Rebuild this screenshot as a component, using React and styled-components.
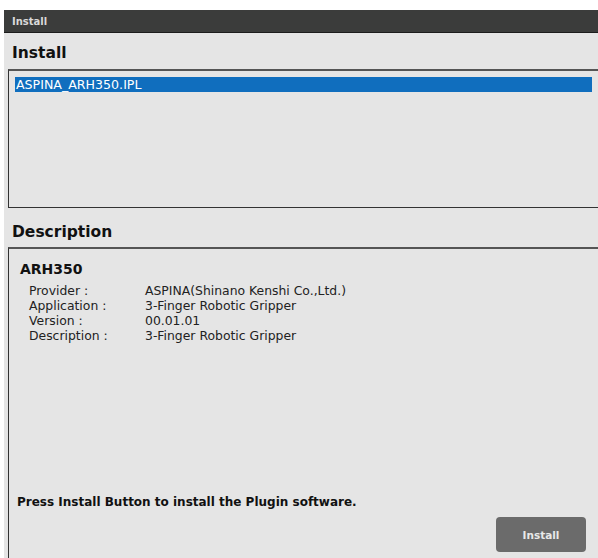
import React from 'react';
import styled, { createGlobalStyle } from 'styled-components';

const GlobalStyle = createGlobalStyle`
html, body {
  margin: 0;
  padding: 0;
  background: #ffffff;
  overflow: hidden;
}
body {
  font-family: "DejaVu Sans", Verdana, sans-serif;
}
`;

const Screen = styled.div`
padding: 10px 0 0 4px;
width: 596px;
height: 548px;
overflow: hidden;
`;

const Window = styled.div`
background: #e5e5e5;
height: 100%;
display: flex;
flex-direction: column;
`;

const TitleBar = styled.div`
height: 22px;
background: #3b3c3b;
border-bottom: 1px solid #1c1c1c;
color: #d9d9d9;
font-size: 10px;
font-weight: bold;
display: flex;
align-items: center;
padding-left: 8px;
`;

const Body = styled.div`
flex: 1;
display: flex;
flex-direction: column;
padding-left: 4px;
`;

const SectionTitle = styled.h2`
box-sizing: border-box;
margin: 0;
font-size: 15.5px;
font-weight: bold;
color: #111;
height: ${p => p.$height}px;
padding: ${p => p.$top}px 0 0 4px;
display: flex;
align-items: center;
`;

const Panel = styled.div`
box-sizing: border-box;
border: 1px solid #333;
border-top: 2px solid #555;
`;

const FileList = styled(Panel)`
height: 139px;
padding: 6px 7px 6px 6px;
`;

const FileItem = styled.div`
background: ${p => (p.$selected ? '#106ebe' : 'transparent')};
color: ${p => (p.$selected ? '#fff' : '#111')};
font-size: 12.6px;
height: 15px;
line-height: 15px;
padding-left: 1px;
`;

const DescPanel = styled(Panel)`
flex: 1;
display: flex;
flex-direction: column;
padding: 11px 13px 0 11px;
border-bottom: none;
`;

const PluginName = styled.div`
font-size: 14px;
font-weight: bold;
color: #111;
height: 18px;
line-height: 18px;
margin-bottom: 5px;
`;

const InfoGrid = styled.div`
display: grid;
grid-template-columns: 116px auto;
padding-left: 9px;
font-size: 12.4px;
line-height: 15px;
color: #222;
`;

const Spacer = styled.div`
flex: 1;
`;

const Notice = styled.div`
font-size: 12px;
font-weight: bold;
color: #111;
margin: 0 0 8px -3px;
`;

const Actions = styled.div`
display: flex;
justify-content: flex-end;
margin-bottom: 6px;
`;

const Button = styled.button`
width: 90px;
height: 35px;
border: none;
border-radius: 4px;
background: #6b6b6b;
color: #e8e8e8;
font-family: inherit;
font-size: 10.5px;
font-weight: bold;
`;

const info = [
  ['Provider :', 'ASPINA(Shinano Kenshi Co.,Ltd.)'],
  ['Application :', '3-Finger Robotic Gripper'],
  ['Version :', '00.01.01'],
  ['Description :', '3-Finger Robotic Gripper'],
];

export default function App() {
  return (
    <>
      <GlobalStyle />
      <Screen>
        <Window>
          <TitleBar>Install</TitleBar>
          <Body>
            <SectionTitle $height={36} $top={4}>Install</SectionTitle>
            <FileList>
              <FileItem $selected>ASPINA_ARH350.IPL</FileItem>
            </FileList>
            <SectionTitle $height={39} $top={9}>Description</SectionTitle>
            <DescPanel>
              <PluginName>ARH350</PluginName>
              <InfoGrid>
                {info.map(([k, v]) => (
                  <React.Fragment key={k}>
                    <span>{k}</span>
                    <span>{v}</span>
                  </React.Fragment>
                ))}
              </InfoGrid>
              <Spacer />
              <Notice>Press Install Button to install the Plugin software.</Notice>
              <Actions>
                <Button>Install</Button>
              </Actions>
            </DescPanel>
          </Body>
        </Window>
      </Screen>
    </>
  );
}
